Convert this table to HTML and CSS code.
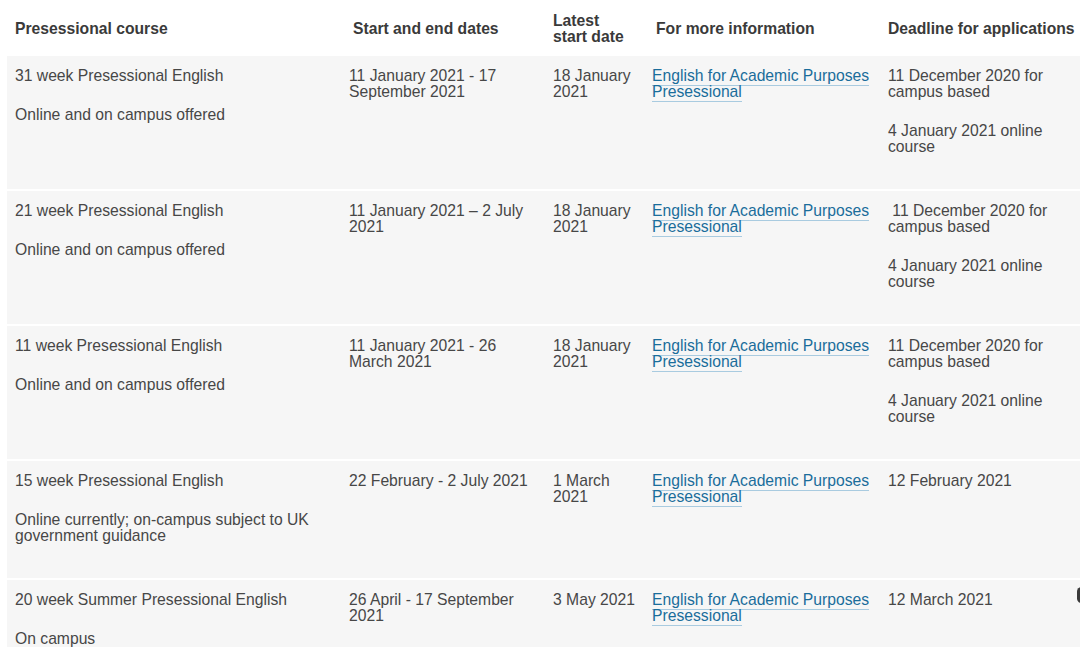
FILE: index.html
```html
<!DOCTYPE html>
<html lang="en">
<head>
<meta charset="utf-8">
<title>Presessional courses</title>
<link rel="stylesheet" href="styles.css">
</head>
<body>
<div class="page">
<table class="courses">
  <colgroup>
    <col class="c1"><col class="c2"><col class="c3"><col class="c4"><col class="c5">
  </colgroup>
  <thead>
    <tr>
      <th>Presessional course</th>
      <th class="shift">Start and end dates</th>
      <th>Latest start date</th>
      <th class="shift">For more information</th>
      <th>Deadline for applications</th>
    </tr>
  </thead>
  <tbody>
    <tr>
      <td><p>31 week Presessional English</p><p>Online and on campus offered</p></td>
      <td><p>11 January 2021 - 17 September 2021</p></td>
      <td><p>18 January 2021</p></td>
      <td><p><a href="#">English for Academic Purposes Presessional</a></p></td>
      <td><p>11 December 2020 for campus based</p><p>4 January 2021 online course</p></td>
    </tr>
    <tr>
      <td><p>21 week Presessional English</p><p>Online and on campus offered</p></td>
      <td><p>11 January 2021 – 2 July 2021</p></td>
      <td><p>18 January 2021</p></td>
      <td><p><a href="#">English for Academic Purposes Presessional</a></p></td>
      <td><p>&nbsp;11 December 2020 for campus based</p><p>4 January 2021 online course</p></td>
    </tr>
    <tr>
      <td><p>11 week Presessional English</p><p>Online and on campus offered</p></td>
      <td><p>11 January 2021 - 26 March 2021</p></td>
      <td><p>18 January 2021</p></td>
      <td><p><a href="#">English for Academic Purposes Presessional</a></p></td>
      <td><p>11 December 2020 for campus based</p><p>4 January 2021 online course</p></td>
    </tr>
    <tr>
      <td><p>15 week Presessional English</p><p>Online currently; on-campus subject to UK government guidance</p></td>
      <td><p>22 February - 2 July 2021</p></td>
      <td><p>1 March 2021</p></td>
      <td><p><a href="#">English for Academic Purposes Presessional</a></p></td>
      <td><p>12 February 2021</p></td>
    </tr>
    <tr>
      <td><p>20 week Summer Presessional English</p><p>On campus</p></td>
      <td><p>26 April - 17 September 2021</p></td>
      <td><p>3 May 2021</p></td>
      <td><p><a href="#">English for Academic Purposes Presessional</a></p></td>
      <td><p>12 March 2021</p></td>
    </tr>
  </tbody>
</table>
<span class="edge-knob"></span>
</div>
</body>
</html>
```
FILE: styles.css
```css
html, body {
  margin: 0;
  padding: 0;
  background: #fff;
  overflow: hidden;
}
body {
  font-family: "Liberation Sans", Arial, sans-serif;
  font-size: 15.7px;
  line-height: 16px;
  color: #474747;
}
.page {
  position: relative;
  width: 1080px;
  height: 647px;
  overflow: hidden;
}
.courses {
  margin-left: 7px;
  width: 1086px;
  table-layout: fixed;
  border-collapse: separate;
  border-spacing: 0;
}
.c1 { width: 334px; }
.c2 { width: 204px; }
.c3 { width: 99px; }
.c4 { width: 236px; }
.c5 { width: 213px; }

.courses th {
  text-align: left;
  font-weight: bold;
  color: #3a3a3a;
  vertical-align: middle;
  height: 32px;
  padding: 13px 8px 11px;
}
.courses th.shift {
  padding-left: 12px;
}
.courses td {
  background: #f6f6f6;
  vertical-align: top;
  padding: 12px 8px 11px;
  border-bottom: 2px solid #fff;
}
.courses p {
  margin: 0 0 23px;
}
.courses a {
  color: #1a6d9b;
  text-decoration: none;
  padding-bottom: 1px;
  border-bottom: 1px solid #a9cbe0;
}
.edge-knob {
  position: absolute;
  right: -6px;
  top: 587px;
  width: 9px;
  height: 16px;
  border-radius: 5px;
  background: #3a3a3a;
}
```
